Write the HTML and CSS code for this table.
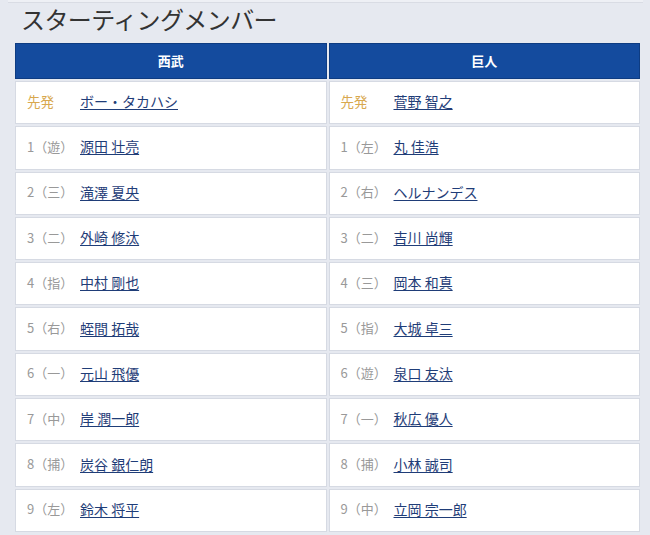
FILE: index.html
```html
<!DOCTYPE html>
<html lang="ja">
<head>
<meta charset="utf-8">
<title>スターティングメンバー</title>
<link rel="stylesheet" href="styles.css">
</head>
<body>
<div class="topbar"></div>
<h1 class="title">スターティングメンバー</h1>
<div class="lineup">
  <section class="team">
    <div class="team-head">西武</div>
    <div class="row"><span class="label starter">先発</span><a class="name" href="#">ボー・タカハシ</a></div>
    <div class="row"><span class="label">1（遊）</span><a class="name" href="#">源田 壮亮</a></div>
    <div class="row"><span class="label">2（三）</span><a class="name" href="#">滝澤 夏央</a></div>
    <div class="row"><span class="label">3（二）</span><a class="name" href="#">外崎 修汰</a></div>
    <div class="row"><span class="label">4（指）</span><a class="name" href="#">中村 剛也</a></div>
    <div class="row"><span class="label">5（右）</span><a class="name" href="#">蛭間 拓哉</a></div>
    <div class="row"><span class="label">6（一）</span><a class="name" href="#">元山 飛優</a></div>
    <div class="row"><span class="label">7（中）</span><a class="name" href="#">岸 潤一郎</a></div>
    <div class="row"><span class="label">8（捕）</span><a class="name" href="#">炭谷 銀仁朗</a></div>
    <div class="row"><span class="label">9（左）</span><a class="name" href="#">鈴木 将平</a></div>
  </section>
  <section class="team">
    <div class="team-head">巨人</div>
    <div class="row"><span class="label starter">先発</span><a class="name" href="#">菅野 智之</a></div>
    <div class="row"><span class="label">1（左）</span><a class="name" href="#">丸 佳浩</a></div>
    <div class="row"><span class="label">2（右）</span><a class="name" href="#">ヘルナンデス</a></div>
    <div class="row"><span class="label">3（二）</span><a class="name" href="#">吉川 尚輝</a></div>
    <div class="row"><span class="label">4（三）</span><a class="name" href="#">岡本 和真</a></div>
    <div class="row"><span class="label">5（指）</span><a class="name" href="#">大城 卓三</a></div>
    <div class="row"><span class="label">6（遊）</span><a class="name" href="#">泉口 友汰</a></div>
    <div class="row"><span class="label">7（一）</span><a class="name" href="#">秋広 優人</a></div>
    <div class="row"><span class="label">8（捕）</span><a class="name" href="#">小林 誠司</a></div>
    <div class="row"><span class="label">9（中）</span><a class="name" href="#">立岡 宗一郎</a></div>
  </section>
</div>
</body>
</html>
```
FILE: styles.css
```css
html, body {
  margin: 0;
  padding: 0;
  background: #e6e9f0;
  font-family: "Noto Sans CJK JP", "Noto Sans", sans-serif;
  overflow: hidden;
}

.topbar {
  margin-left: 8px;
  width: 635px;
  height: 2px;
  background: #eef0f5;
  border-bottom: 1px solid #d9dce4;
}

.title {
  margin: 0 0 8px 0;
  padding-left: 21px;
  height: 32px;
  line-height: 32px;
  font-size: 24px;
  font-weight: normal;
  color: #333333;
  letter-spacing: -0.6px;
}

.lineup {
  margin-left: 15px;
  width: 625px;
  display: grid;
  grid-template-columns: 1fr 1fr;
  column-gap: 2px;
}

.team {
  display: grid;
  grid-template-rows: 36px repeat(10, 43.3px);
  row-gap: 2px;
}

.team-head {
  display: flex;
  align-items: center;
  justify-content: center;
  background: #144b9e;
  border: 1px solid #0e3c82;
  color: #ffffff;
  font-size: 13px;
  font-weight: bold;
  padding-bottom: 1px;
}

.row {
  display: flex;
  align-items: center;
  background: #ffffff;
  border: 1px solid #d6dae3;
  padding-left: 11px;
  padding-bottom: 3px;
}

.label {
  width: 53px;
  flex: none;
  font-size: 13px;
  color: #999999;
}

.label.starter {
  font-size: 13.5px;
  color: #d8a84e;
}

.name {
  font-size: 14px;
  color: #1f3d78;
  text-decoration: underline;
  text-underline-offset: 2px;
}
```
